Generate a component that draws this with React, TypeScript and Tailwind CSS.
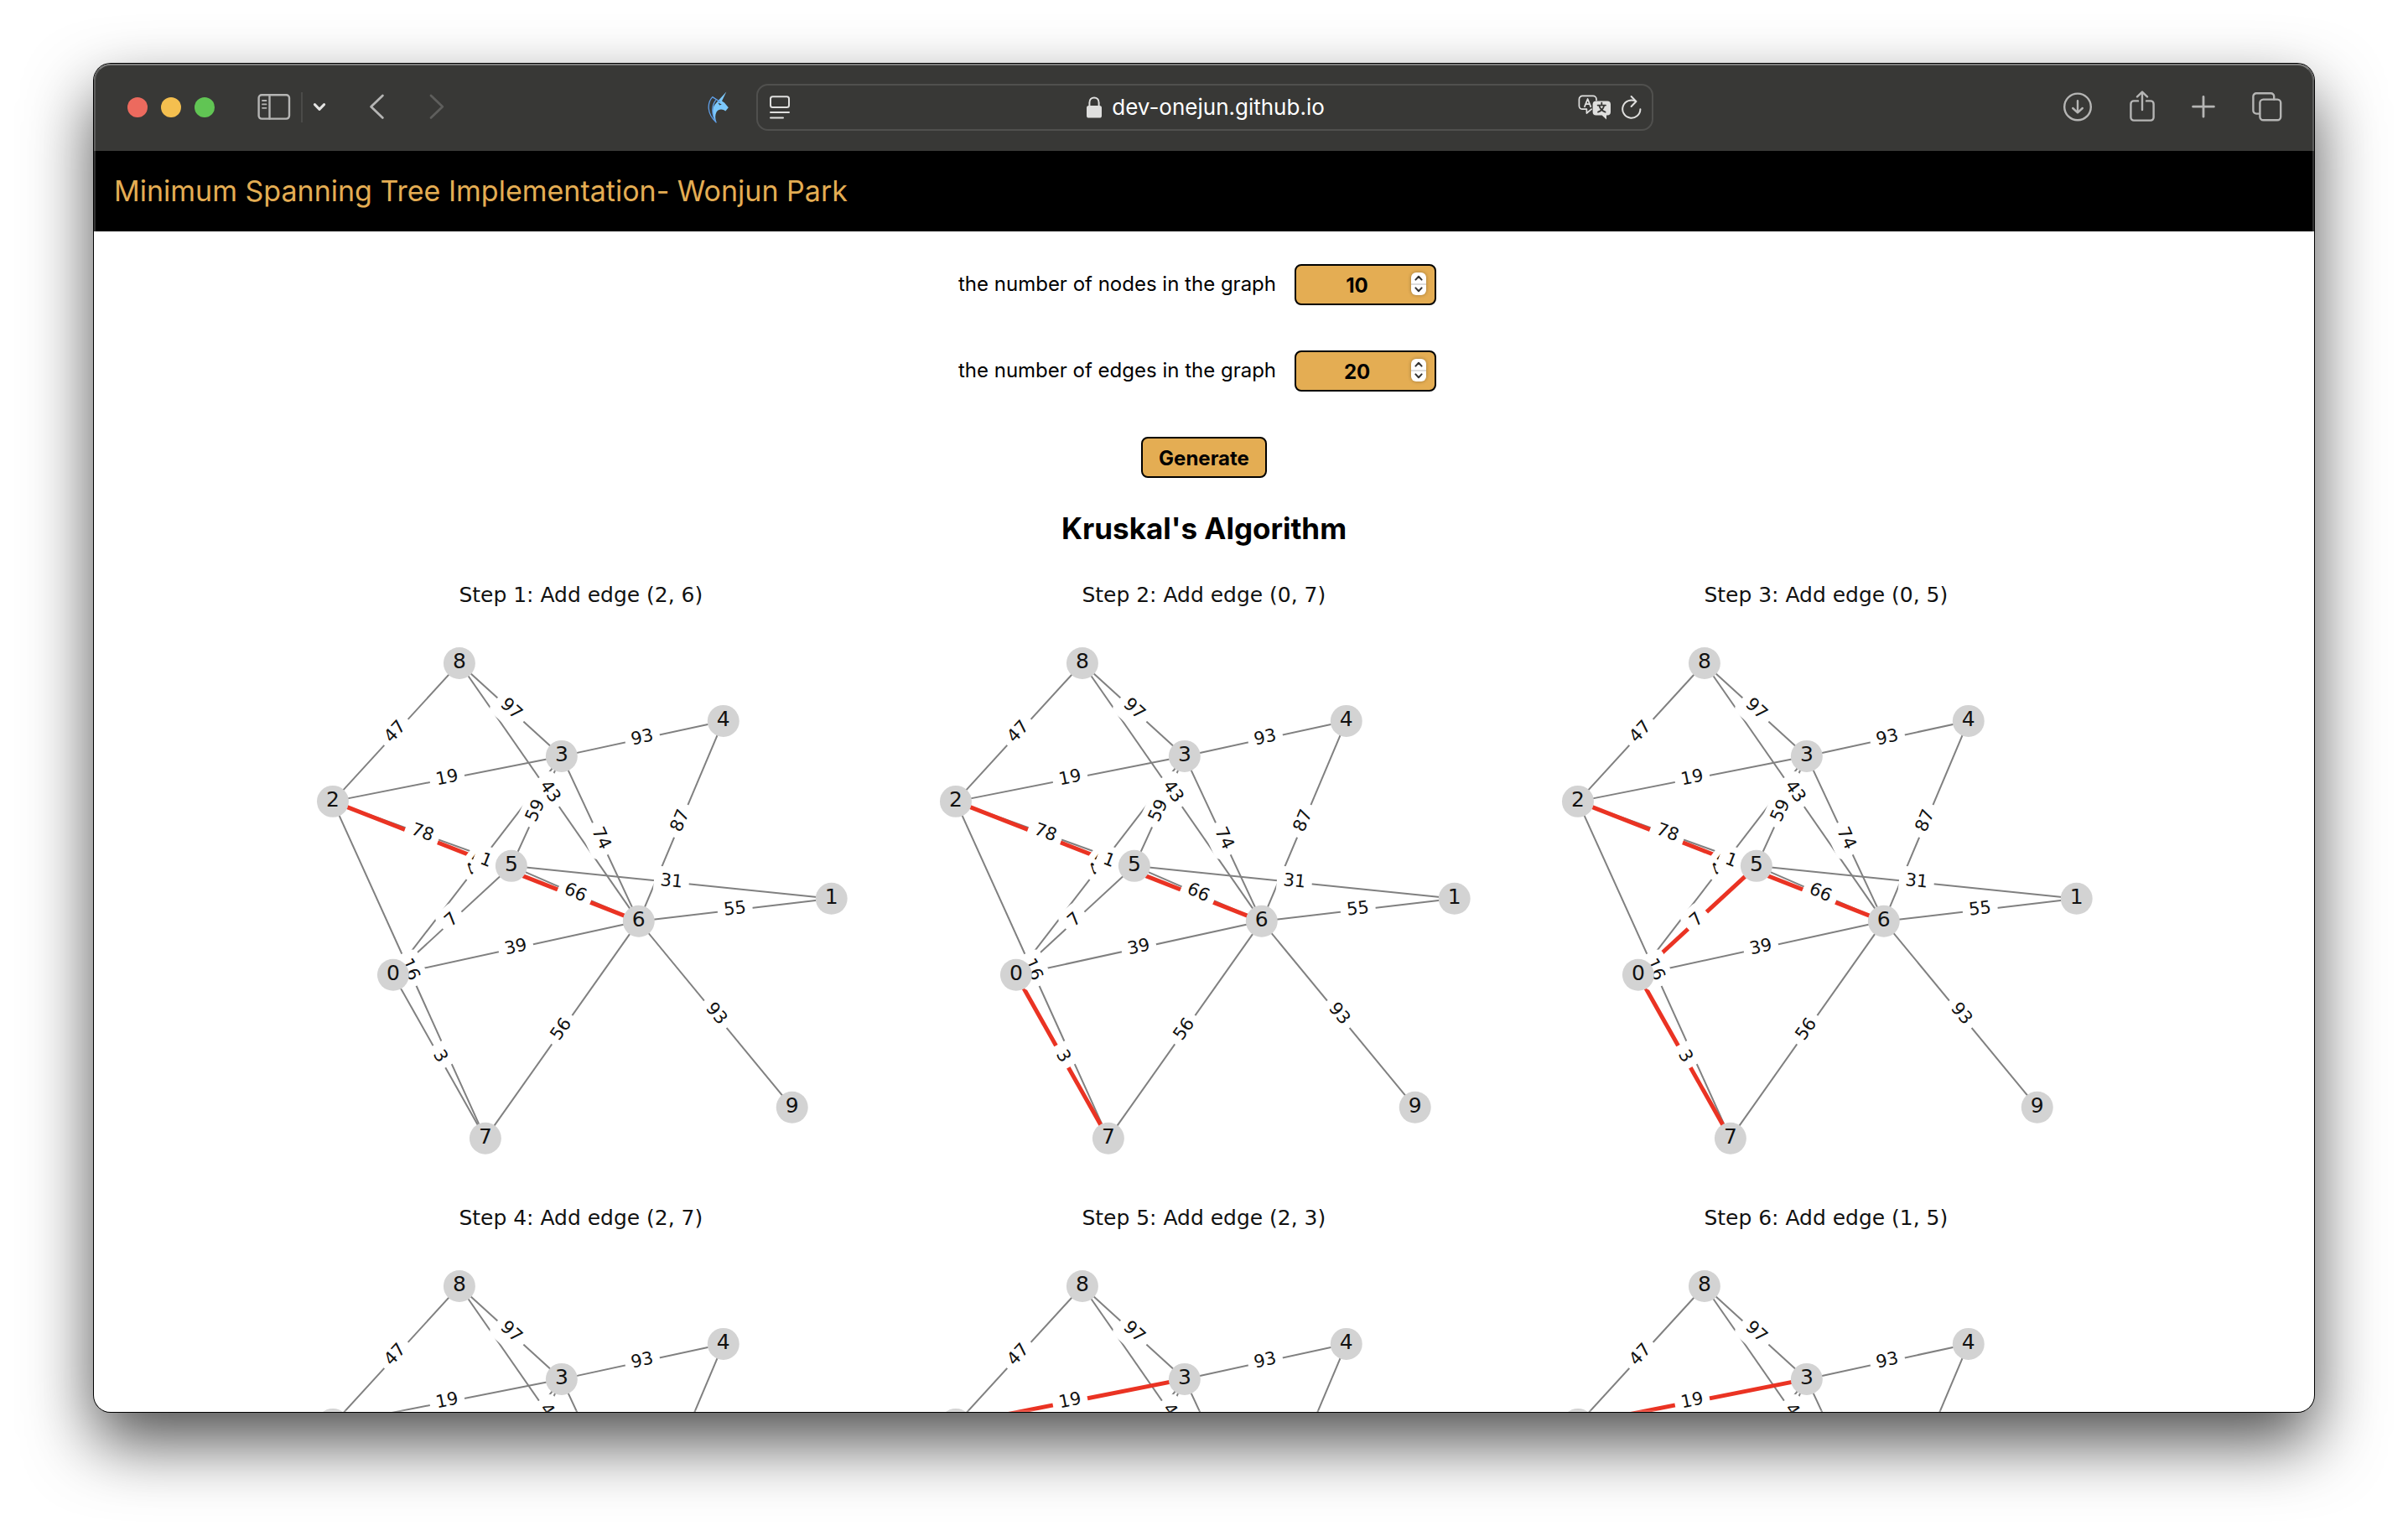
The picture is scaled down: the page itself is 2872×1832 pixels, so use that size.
import React, { useState } from "react";

type Point = [number, number];
type Edge = [number, number, number];

const NODES: Record<number, Point> = {
  0: [147, 483],
  1: [670, 392],
  2: [75, 276],
  3: [348, 222],
  4: [541, 180],
  5: [288, 353],
  6: [440, 419],
  7: [257, 678],
  8: [226, 111],
  9: [623, 641],
};

// The label of this edge lies beneath the boxes of its neighbours.
const COVERED_EDGE: Edge = [0, 3, 45];

const OPEN_EDGES: Edge[] = [
  [2, 8, 47],
  [3, 8, 97],
  [2, 3, 19],
  [3, 4, 93],
  [4, 6, 87],
  [3, 6, 74],
  [6, 8, 43],
  [3, 5, 59],
  [2, 5, 78],
  [2, 6, 1],
  [1, 5, 31],
  [5, 6, 66],
  [1, 6, 55],
  [0, 5, 7],
  [0, 6, 39],
  [2, 7, 16],
  [0, 7, 3],
  [6, 7, 56],
  [6, 9, 93],
];

const EDGES: Edge[] = [COVERED_EDGE, ...OPEN_EDGES];

const KRUSKAL_STEPS: Point[] = [
  [2, 6],
  [0, 7],
  [0, 5],
  [2, 7],
  [2, 3],
  [1, 5],
];

function labelTransform(u: number, v: number) {
  let a = NODES[u];
  let b = NODES[v];
  if (a[0] > b[0]) [a, b] = [b, a];
  const x = (a[0] + b[0]) / 2;
  const y = (a[1] + b[1]) / 2;
  const angle = (Math.atan2(b[1] - a[1], b[0] - a[0]) * 180) / Math.PI;
  return `translate(${x} ${y}) rotate(${angle})`;
}

function LabelBox({ edge: [u, v, weight] }: { edge: Edge }) {
  const width = weight > 9 ? 42 : 30;
  return (
    <rect
      transform={labelTransform(u, v)}
      x={-width / 2}
      y={-18}
      width={width}
      height={36}
      rx={7}
      fill="#fff"
    />
  );
}

function LabelText({ edge: [u, v, weight] }: { edge: Edge }) {
  return (
    <text transform={labelTransform(u, v)} y={5} textAnchor="middle" className="text-[21px]">
      {weight}
    </text>
  );
}

function StepGraph({ index }: { index: number }) {
  const added = KRUSKAL_STEPS.slice(0, index + 1);
  const [from, to] = KRUSKAL_STEPS[index];
  return (
    <svg
      viewBox="0 0 743 743"
      role="img"
      aria-label={`Kruskal step ${index + 1}`}
      className="aspect-square w-full font-['DejaVu_Sans',sans-serif]"
      fill="#111"
    >
      <text x={371} y={38} textAnchor="middle" className="text-[25px]">
        {`Step ${index + 1}: Add edge (${from}, ${to})`}
      </text>
      {EDGES.map(([u, v]) => (
        <line
          key={`${u}-${v}`}
          x1={NODES[u][0]}
          y1={NODES[u][1]}
          x2={NODES[v][0]}
          y2={NODES[v][1]}
          stroke="#808080"
          strokeWidth={2}
        />
      ))}
      {added.map(([u, v]) => (
        <line
          key={`${u}-${v}`}
          x1={NODES[u][0]}
          y1={NODES[u][1]}
          x2={NODES[v][0]}
          y2={NODES[v][1]}
          stroke="#ea3323"
          strokeWidth={5}
        />
      ))}
      <LabelBox edge={COVERED_EDGE} />
      <LabelText edge={COVERED_EDGE} />
      {OPEN_EDGES.map((edge) => (
        <LabelBox key={`${edge[0]}-${edge[1]}`} edge={edge} />
      ))}
      {OPEN_EDGES.map((edge) => (
        <LabelText key={`${edge[0]}-${edge[1]}`} edge={edge} />
      ))}
      {Object.entries(NODES).map(([id, [x, y]]) => (
        <g key={id}>
          <circle cx={x} cy={y} r={19} fill="#d3d3d3" />
          <text x={x} y={y + 6} textAnchor="middle" className="text-[25px]">
            {id}
          </text>
        </g>
      ))}
    </svg>
  );
}

const stroke = {
  fill: "none",
  stroke: "currentColor",
  strokeLinecap: "round" as const,
  strokeLinejoin: "round" as const,
};

function SidebarIcon() {
  return (
    <svg width="40" height="32" viewBox="0 0 40 32" {...stroke} strokeWidth="2.4">
      <rect x="1.6" y="1.2" width="36.4" height="28.4" rx="3.5" />
      <path d="M14.5 1.5v28" />
      <path d="M6 8h4.5M6 12.4h4.5M6 16.8h4.5" strokeWidth="1.8" />
    </svg>
  );
}

function UnicornIcon() {
  return (
    <svg width="26" height="38" viewBox="0 0 26 38">
      <path
        d="M22.3 .6 17 11.6 20 13.6 24.8 19.2 21.3 23.6 19.4 22.2C16 20.6 12.4 21.5 10.6 24.5 8.8 28 8.6 32 10.6 37.4 5.4 30.5 4.4 21.5 8.6 15.8L12.6 11Z"
        fill="#7cc8fb"
      />
      <path d="M12.4 13.6 16.8 15.4 14.2 16.6Z" fill="#383836" />
      <path
        d="M15 12.6 5.8 6.6C-1 14-.8 27 10 36.8 4.6 28 4.4 17 9.8 10.4"
        fill="none"
        stroke="#5f9fe8"
        strokeWidth="1.3"
        strokeLinejoin="round"
      />
    </svg>
  );
}

function ReaderIcon() {
  return (
    <svg width="24" height="28" viewBox="0 0 24 28" {...stroke} strokeWidth="2">
      <rect x="1" y="1.2" width="22" height="12.8" rx="2.5" />
      <path d="M1 20h22M1 26.4h15" />
    </svg>
  );
}

function LockIcon() {
  return (
    <svg width="18" height="26" viewBox="0 0 18 26">
      <path
        d="M3.4 12V7.4C3.4 3.6 5.8 1.4 9 1.4s5.6 2.2 5.6 6V12"
        fill="none"
        stroke="#dfdfde"
        strokeWidth="2"
      />
      <rect x="0" y="11" width="18" height="14.6" rx="2.6" fill="#dfdfde" />
    </svg>
  );
}

function TranslateIcon() {
  return (
    <svg width="40" height="30" viewBox="0 0 40 30" {...stroke} strokeWidth="1.7">
      <path d="M16.2 17.2 10.4 22V17.2H5.4A4 4 0 0 1 1.4 13.2V5.4A4 4 0 0 1 5.4 1.4H18A4 4 0 0 1 22 5.4V6.4" />
      <path d="M8 14.2 11.6 5l3.6 9.2M9.2 11.2h4.8" strokeWidth="1.8" />
      <path
        d="M21.6 7.4H35A4 4 0 0 1 39 11.4V20.6A4 4 0 0 1 35 24.6H34V29.4L28.6 24.6H21.6A4 4 0 0 1 17.6 20.6V11.4A4 4 0 0 1 21.6 7.4Z"
        fill="currentColor"
        stroke="none"
      />
      <path
        d="M28.3 9.6v2.4M23.6 12.6h9.4M25.4 13C26.4 17 29 19.4 32.6 20.6M31.2 13C30.2 17 27.6 19.4 24 20.6"
        stroke="#383836"
        strokeWidth="1.8"
      />
    </svg>
  );
}

function ReloadIcon() {
  return (
    <svg width="24" height="30" viewBox="0 0 24 30" {...stroke} strokeWidth="2">
      <path d="M22.4 17.2A10.6 10.6 0 1 1 17.2 8" />
      <path d="M11.6 2 17.4 8 11.6 14" />
    </svg>
  );
}

function DownloadIcon() {
  return (
    <svg width="36" height="36" viewBox="0 0 36 36" {...stroke} strokeWidth="2.4">
      <circle cx="18" cy="17.4" r="15.8" />
      <path d="M18 10.2v14M12.2 19 18 24.4l5.8-5.4" />
    </svg>
  );
}

function ShareIcon() {
  return (
    <svg width="30" height="40" viewBox="0 0 30 40" {...stroke} strokeWidth="2.4">
      <path d="M10 12.4H5A3.6 3.6 0 0 0 1.4 16V32A3.6 3.6 0 0 0 5 35.6H25A3.6 3.6 0 0 0 28.6 32V16A3.6 3.6 0 0 0 25 12.4H20" />
      <path d="M15 23V1.8M9 7.4 15 1.6l6 5.8" />
    </svg>
  );
}

function PlusIcon() {
  return (
    <svg width="28" height="28" viewBox="0 0 28 28" {...stroke} strokeWidth="2.8">
      <path d="M14 1.4v23.8M1.6 13.2h24.8" />
    </svg>
  );
}

function TabsIcon() {
  return (
    <svg width="36" height="36" viewBox="0 0 36 36" {...stroke} strokeWidth="2.4">
      <rect x="9.4" y="8.6" width="24.8" height="24.6" rx="4" />
      <path d="M9 25.6H5.2A3.8 3.8 0 0 1 1.4 21.8V5A3.8 3.8 0 0 1 5.2 1.2H22.4A3.8 3.8 0 0 1 26.2 5V8.4" />
    </svg>
  );
}

function Toolbar() {
  return (
    <div className="flex h-26 shrink-0 items-center bg-[#383836] text-[#b5b5b4]">
      <div className="flex flex-1 items-center pl-10">
        <div className="flex gap-4">
          <button aria-label="Close" className="size-6 rounded-full bg-[#ec6a5e]" />
          <button aria-label="Minimize" className="size-6 rounded-full bg-[#f4bf4f]" />
          <button aria-label="Zoom" className="size-6 rounded-full bg-[#61c554]" />
        </div>
        <button aria-label="Show sidebar" className="ml-[51px]">
          <SidebarIcon />
        </button>
        <span className="ml-3 h-9 w-0.5 bg-[#4b4b49]" />
        <button aria-label="Tab groups" className="ml-3 text-[#e4e4e3]">
          <svg width="16" height="12" viewBox="0 0 16 12" {...stroke} strokeWidth="3">
            <path d="M2.4 2.6 8 8.4l5.6-5.8" />
          </svg>
        </button>
        <button aria-label="Back" className="ml-[51px]">
          <svg width="20" height="32" viewBox="0 0 20 32" {...stroke} strokeWidth="2.8">
            <path d="M16.4 2 2.6 15.2l13.8 13.2" />
          </svg>
        </button>
        <button aria-label="Forward" className="ml-[51px] text-[#5e5e5c]">
          <svg width="20" height="32" viewBox="0 0 20 32" {...stroke} strokeWidth="2.8">
            <path d="M3 2l13.8 13.2L3 28.4" />
          </svg>
        </button>
        <button aria-label="Extension" className="mr-8 ml-auto">
          <UnicornIcon />
        </button>
      </div>
      <div className="flex h-14 w-[1070px] items-center rounded-[14px] border-2 border-[#50504e] text-[#dfdfde]">
        <div className="flex flex-1 pl-3.5">
          <button aria-label="Page menu">
            <ReaderIcon />
          </button>
        </div>
        <a href="#top" className="flex items-center gap-3 text-[26px] leading-8 text-white">
          <LockIcon />
          dev-onejun.github.io
        </a>
        <div className="flex flex-1 items-center justify-end gap-3 pr-3">
          <button aria-label="Translate">
            <TranslateIcon />
          </button>
          <button aria-label="Reload">
            <ReloadIcon />
          </button>
        </div>
      </div>
      <div className="flex flex-1 items-center justify-end gap-11 pr-[38px]">
        <button aria-label="Downloads">
          <DownloadIcon />
        </button>
        <button aria-label="Share">
          <ShareIcon />
        </button>
        <button aria-label="New tab">
          <PlusIcon />
        </button>
        <button aria-label="Tab overview">
          <TabsIcon />
        </button>
      </div>
    </div>
  );
}

function NumberField({
  id,
  label,
  value,
  onChange,
}: {
  id: string;
  label: string;
  value: number;
  onChange: (n: number) => void;
}) {
  return (
    <div className="mr-4 flex items-center gap-[22px]">
      <label htmlFor={id} className="pb-0.5 text-2xl leading-8">
        {label}
      </label>
      <div className="relative">
        <input
          id={id}
          type="number"
          value={value}
          onChange={(e) => onChange(Number(e.target.value))}
          className="block h-[49px] w-[169px] rounded-lg border-2 border-black bg-[#e4ad53] pt-0.5 pr-5 text-center text-2xl font-bold [appearance:textfield] [&::-webkit-inner-spin-button]:appearance-none"
        />
        <div className="absolute top-2.5 right-3 flex h-[27px] w-[18px] flex-col rounded-md bg-white text-[#333] shadow-[0_0_4px_rgba(0,0,0,0.3)]">
          <button
            aria-label={`Increase ${label}`}
            onClick={() => onChange(value + 1)}
            className="flex flex-1 items-center justify-center border-b-2 border-[#ddd]"
          >
            <svg width="10" height="7" viewBox="0 0 10 7" {...stroke} strokeWidth="2">
              <path d="M1.4 5.6 5 1.8l3.6 3.8" />
            </svg>
          </button>
          <button
            aria-label={`Decrease ${label}`}
            onClick={() => onChange(value - 1)}
            className="flex flex-1 items-center justify-center"
          >
            <svg width="10" height="7" viewBox="0 0 10 7" {...stroke} strokeWidth="2">
              <path d="M1.4 1.4 5 5.2l3.6-3.8" />
            </svg>
          </button>
        </div>
      </div>
    </div>
  );
}

export default function App() {
  const [nodes, setNodes] = useState(10);
  const [edges, setEdges] = useState(20);
  return (
    <div
      id="top"
      className="h-screen overflow-hidden bg-white px-28 pt-19 pb-37 font-['Inter',sans-serif] text-black"
    >
      <div className="relative flex h-full flex-col overflow-hidden rounded-[20px] bg-white shadow-[0_0_0_1px_#000,0_36px_80px_rgba(0,0,0,0.69)]">
        <Toolbar />
        <header className="flex h-24 shrink-0 items-center bg-black px-6">
          <h1 className="text-[34px] leading-11 text-[#e4ad53]">
            Minimum Spanning Tree Implementation- Wonjun Park
          </h1>
        </header>
        <main className="min-h-0 flex-1 overflow-y-auto [scrollbar-width:none]">
          <form
            className="flex flex-col items-center gap-[54px] pt-[39px]"
            onSubmit={(e) => e.preventDefault()}
          >
            <NumberField
              id="nodes"
              label="the number of nodes in the graph"
              value={nodes}
              onChange={setNodes}
            />
            <NumberField
              id="edges"
              label="the number of edges in the graph"
              value={edges}
              onChange={setEdges}
            />
            <button
              type="submit"
              className="h-[49px] rounded-lg border-2 border-black bg-[#e4ad53] px-[19px] pt-0.5 text-2xl font-bold"
            >
              Generate
            </button>
          </form>
          <h2 className="mt-[38px] mb-7 text-center text-[35px] leading-11 font-bold">
            Kruskal's Algorithm
          </h2>
          <div className="mx-[210px] grid grid-cols-3">
            {KRUSKAL_STEPS.map((_, i) => (
              <StepGraph key={i} index={i} />
            ))}
          </div>
        </main>
        <div className="pointer-events-none absolute inset-0 rounded-[20px] border-2 border-white/20 border-t-white/35" />
      </div>
    </div>
  );
}
